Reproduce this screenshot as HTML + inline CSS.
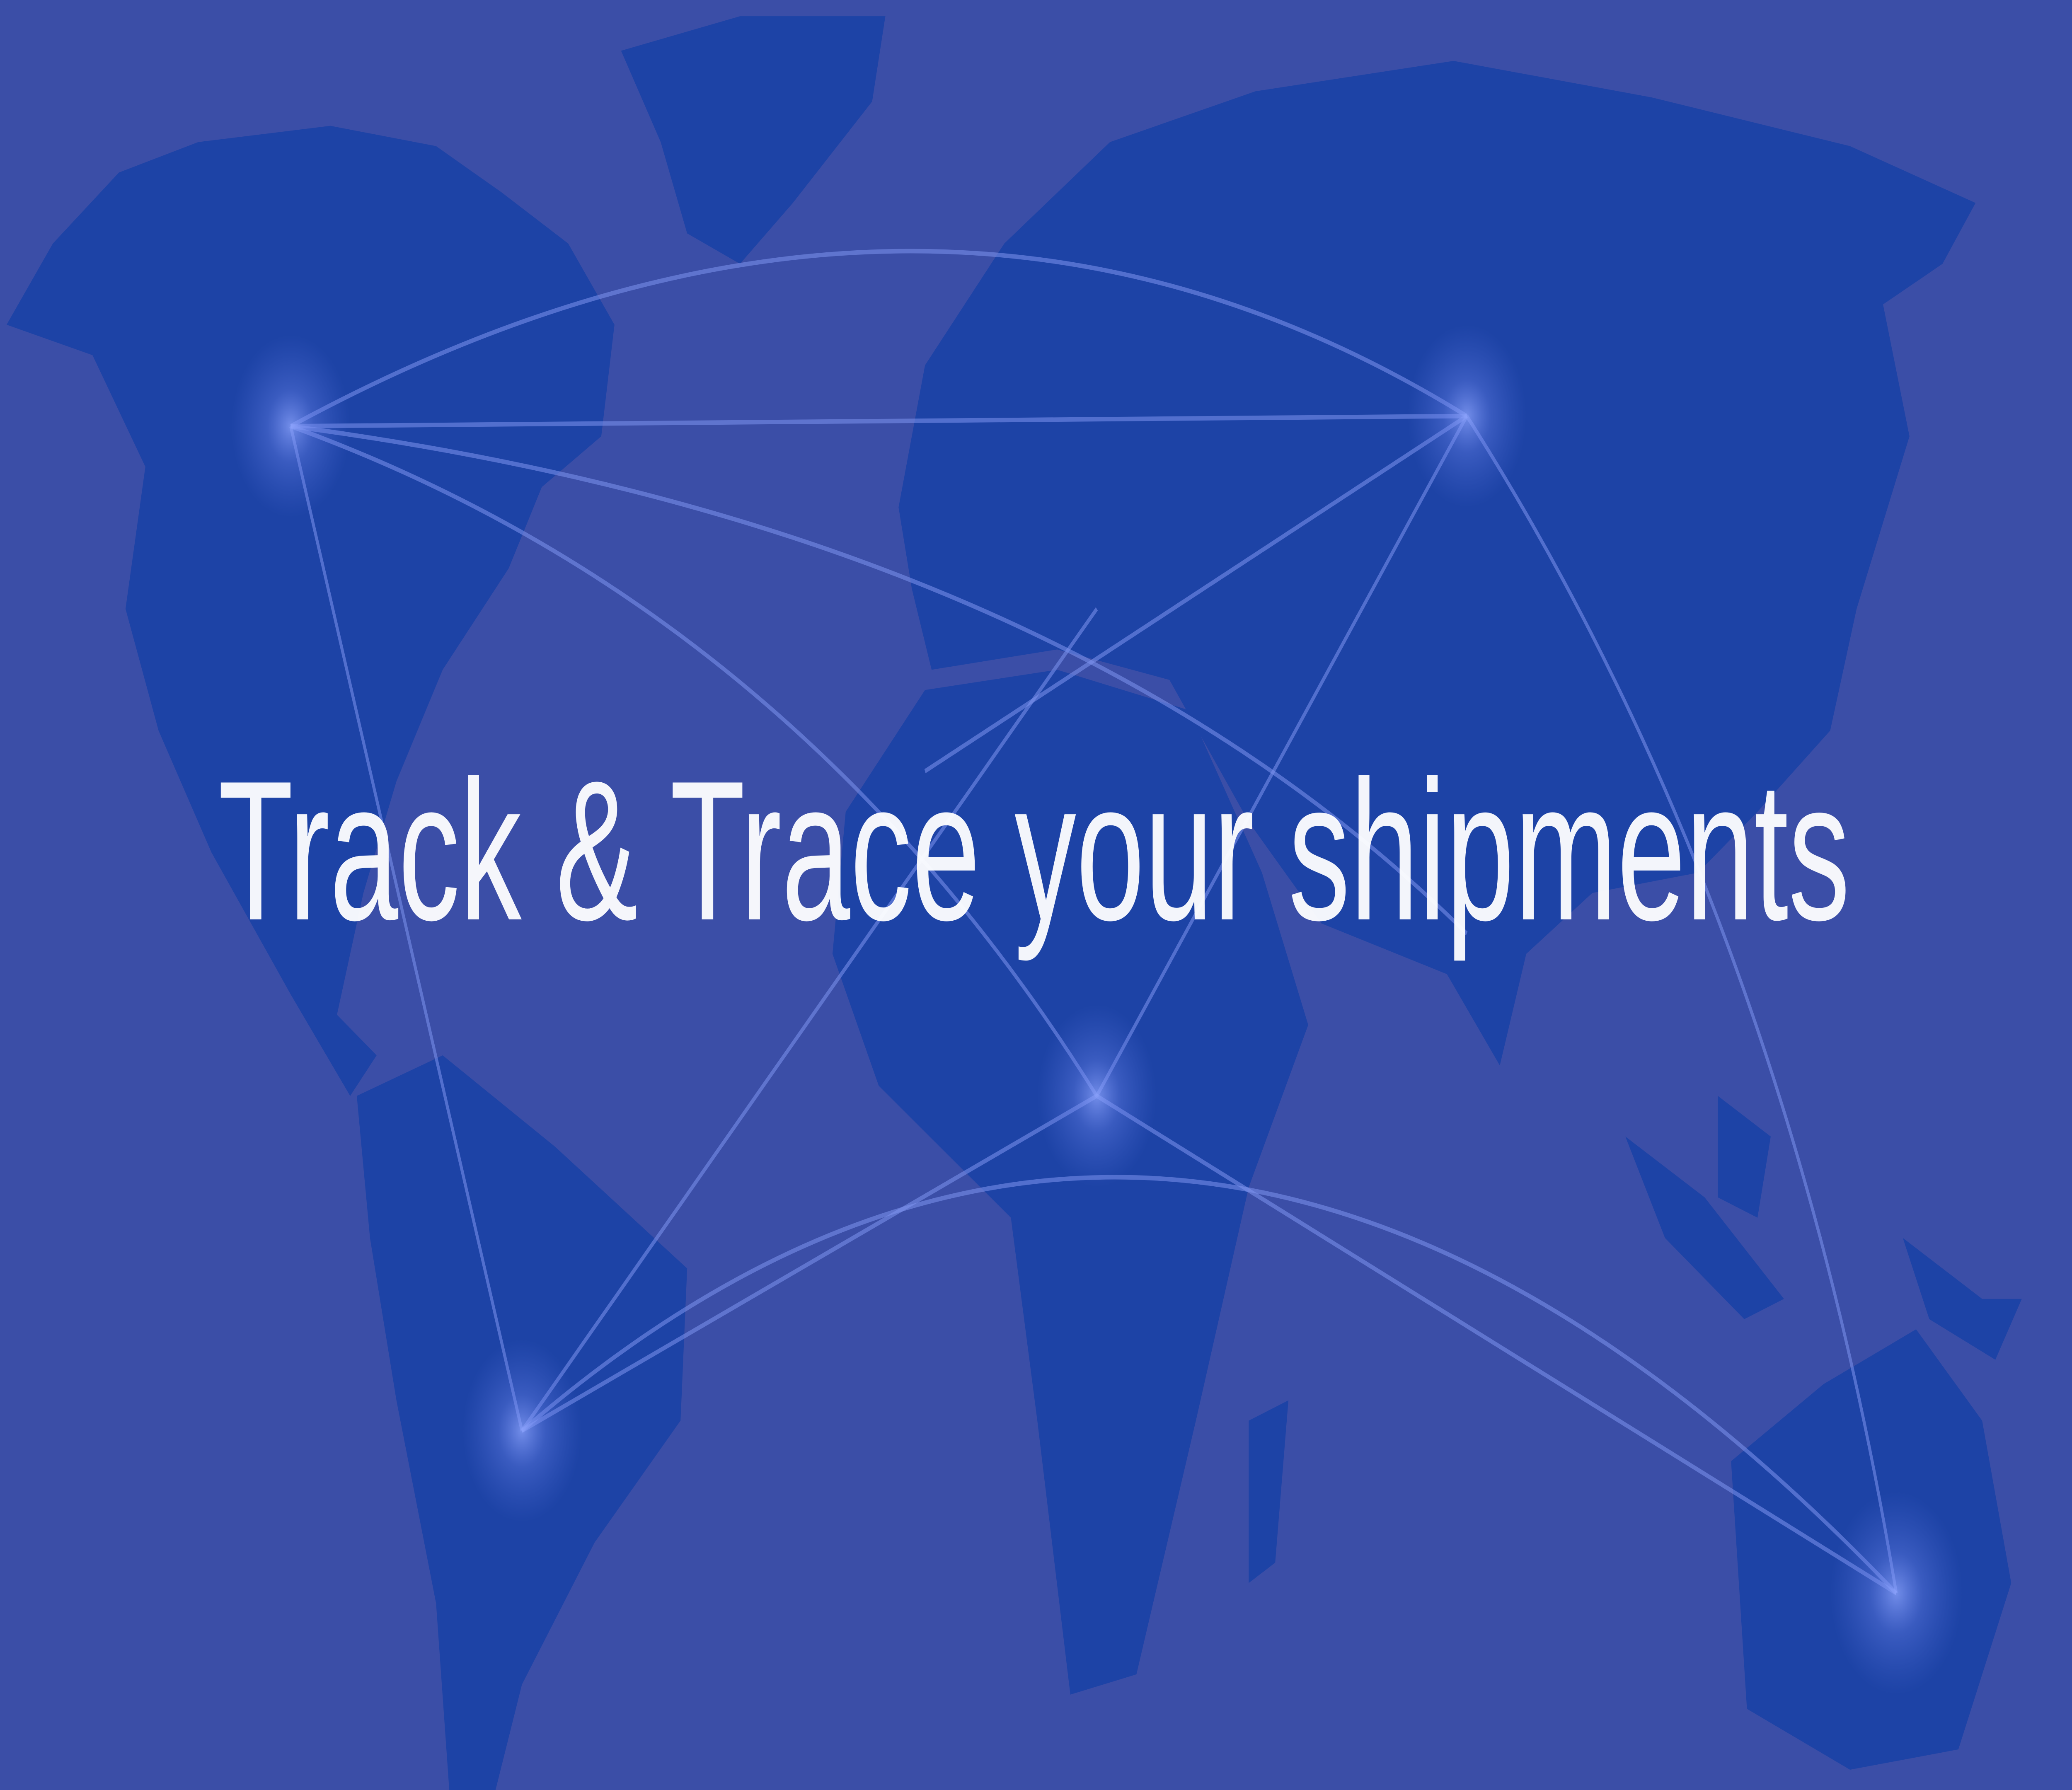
<!DOCTYPE html>
<html><head><meta charset="utf-8"><style>
html,body{margin:0;padding:0;width:100%;height:100%;overflow:hidden;background:#3b4ea7}
svg{display:block;position:fixed;left:0;top:0;width:100vw;height:100vh}
</style></head><body>
<svg viewBox="0 0 1568 882" preserveAspectRatio="none" xmlns="http://www.w3.org/2000/svg">
<defs>
<radialGradient id="g"><stop offset="0" stop-color="#8fa6ff" stop-opacity="0.75"/><stop offset="0.4" stop-color="#6f88f0" stop-opacity="0.35"/><stop offset="1" stop-color="#5a74e0" stop-opacity="0"/></radialGradient>
</defs>
<rect width="1568" height="882" fill="#3b4ea7"/>
<g fill="#1d43a6">
<path d="M5,160 L40,120 L90,85 L150,70 L250,62 L330,72 L380,95 L430,120 L465,160 L455,215 L410,240 L385,280 L335,330 L300,385 L275,440 L255,500 L285,520 L265,540 L220,490 L160,420 L120,360 L95,300 L110,230 L70,175 Z"/>
<path d="M470,25 L560,8 L670,8 L660,50 L600,100 L560,130 L520,115 L500,70 Z"/>
<path d="M270,540 L335,520 L420,565 L520,625 L515,700 L450,760 L395,830 L375,882 L340,882 L330,790 L300,690 L280,610 Z"/>
<path d="M680,250 L700,180 L760,120 L840,70 L950,45 L1100,30 L1250,48 L1400,72 L1495,100 L1470,130 L1425,150 L1445,215 L1405,300 L1385,360 L1330,400 L1285,430 L1205,440 L1155,470 L1135,525 L1095,480 L1000,455 L945,405 L885,335 L800,320 L705,330 L690,290 Z"/>
<path d="M640,400 L700,340 L800,330 L900,350 L955,430 L990,505 L945,585 L905,700 L860,825 L810,835 L785,700 L765,600 L665,535 L630,470 Z"/>
<path d="M1310,720 L1380,682 L1450,655 L1500,700 L1522,780 L1482,862 L1400,872 L1322,842 Z"/>
<path d="M1230,560 L1290,590 L1350,640 L1320,650 L1260,610 Z"/>
<path d="M1440,610 L1500,640 L1530,640 L1510,670 L1460,650 Z"/>
<path d="M945,700 L975,690 L965,770 L945,780 Z"/>
<path d="M1300,540 L1340,560 L1330,600 L1300,590 Z"/>
</g>
<g fill="none" stroke="#7d93ee" stroke-opacity="0.55" stroke-width="2.2">
<path d="M220,210 L1110,205"/>
<path d="M220,210 Q700,40 1110,205"/>
<path d="M220,210 L395,705"/>
<path d="M220,210 Q600,300 830,540"/>
<path d="M220,210 Q800,260 1110,460"/>
<path d="M1110,205 L830,540"/>
<path d="M1110,205 L700,380"/>
<path d="M1110,205 Q1350,450 1435,785"/>
<path d="M395,705 L830,540"/>
<path d="M395,705 Q900,420 1435,785"/>
<path d="M395,705 L830,300"/>
<path d="M830,540 L1435,785"/>
</g>
<g>
<circle cx="220" cy="210" r="45" fill="url(#g)"/>
<circle cx="1110" cy="205" r="45" fill="url(#g)"/>
<circle cx="830" cy="540" r="45" fill="url(#g)"/>
<circle cx="395" cy="705" r="45" fill="url(#g)"/>
<circle cx="1435" cy="785" r="50" fill="url(#g)"/>
</g>
<text x="165" y="453" textLength="1235" lengthAdjust="spacingAndGlyphs" font-family="Liberation Sans, sans-serif" font-size="98" fill="#ffffff" fill-opacity="0.95">Track &amp; Trace your shipments</text>
</svg>
</body></html>
